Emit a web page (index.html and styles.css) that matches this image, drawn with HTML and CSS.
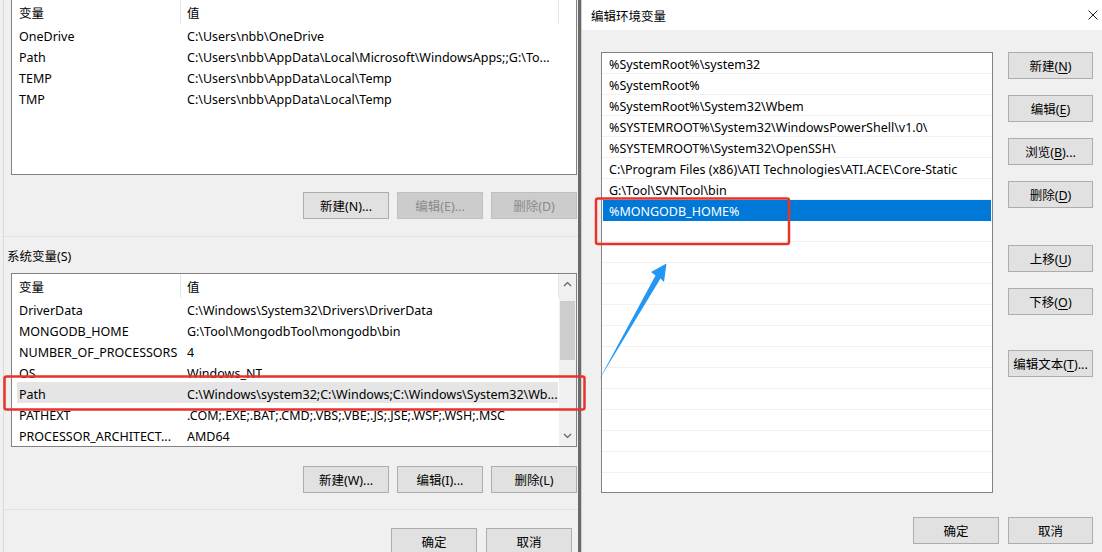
FILE: index.html
```html
<!DOCTYPE html>
<html lang="zh-CN">
<head>
  <meta charset="UTF-8">
  <meta name="viewport" content="width=device-width, initial-scale=1.0">
  <title>编辑环境变量</title>
  <link rel="stylesheet" href="styles.css">
</head>
<body>
  <div class="screen">
    <section class="env-window">
      <div class="list user-list">
        <div class="list-head">
          <span class="head-name">变量</span>
          <span class="head-value">值</span>
        </div>
        <div class="row"><span class="col-name">OneDrive</span><span class="col-value">C:\Users\nbb\OneDrive</span></div>
        <div class="row"><span class="col-name">Path</span><span class="col-value">C:\Users\nbb\AppData\Local\Microsoft\WindowsApps;;G:\To...</span></div>
        <div class="row"><span class="col-name">TEMP</span><span class="col-value">C:\Users\nbb\AppData\Local\Temp</span></div>
        <div class="row"><span class="col-name">TMP</span><span class="col-value">C:\Users\nbb\AppData\Local\Temp</span></div>
      </div>

      <div class="btn-row first-row">
        <button class="btn">新建(N)...</button>
        <button class="btn" disabled>编辑(E)...</button>
        <button class="btn" disabled>删除(D)</button>
      </div>

      <div class="sep sep-top"></div>
      <div class="group-title">系统变量(S)</div>

      <div class="list sys-list">
        <div class="rows">
          <div class="list-head">
            <span class="head-name">变量</span>
            <span class="head-value">值</span>
          </div>
          <div class="row"><span class="col-name">DriverData</span><span class="col-value">C:\Windows\System32\Drivers\DriverData</span></div>
          <div class="row"><span class="col-name">MONGODB_HOME</span><span class="col-value">G:\Tool\MongodbTool\mongodb\bin</span></div>
          <div class="row"><span class="col-name">NUMBER_OF_PROCESSORS</span><span class="col-value">4</span></div>
          <div class="row"><span class="col-name">OS</span><span class="col-value">Windows_NT</span></div>
          <div class="row hover"><span class="col-name">Path</span><span class="col-value">C:\Windows\system32;C:\Windows;C:\Windows\System32\Wb...</span></div>
          <div class="row"><span class="col-name">PATHEXT</span><span class="col-value">.COM;.EXE;.BAT;.CMD;.VBS;.VBE;.JS;.JSE;.WSF;.WSH;.MSC</span></div>
          <div class="row"><span class="col-name">PROCESSOR_ARCHITECT...</span><span class="col-value">AMD64</span></div>
        </div>
        <div class="scrollbar">
          <div class="scroll-btn">
            <svg width="9" height="6" viewBox="0 0 9 6"><polyline points="1,5 4.5,1.5 8,5" fill="none" stroke="#606060" stroke-width="1.2"/></svg>
          </div>
          <div class="thumb"></div>
          <div class="track"></div>
          <div class="scroll-btn">
            <svg width="9" height="6" viewBox="0 0 9 6"><polyline points="1,1 4.5,4.5 8,1" fill="none" stroke="#606060" stroke-width="1.2"/></svg>
          </div>
        </div>
      </div>

      <div class="btn-row second-row">
        <button class="btn">新建(W)...</button>
        <button class="btn">编辑(I)...</button>
        <button class="btn">删除(L)</button>
      </div>

      <div class="sep sep-bottom"></div>

      <div class="btn-row footer-row">
        <button class="btn">确定</button>
        <button class="btn">取消</button>
      </div>
    </section>

    <section class="edit-dialog">
      <div class="title-bar">
        <span class="title">编辑环境变量</span>
        <svg class="close" width="10" height="10" viewBox="0 0 10 10">
          <path d="M0.5 0.5 L9.5 9.5 M9.5 0.5 L0.5 9.5" stroke="#222" stroke-width="1"/>
        </svg>
      </div>

      <div class="dialog-body">
        <div class="path-list">
          <div class="path-item">%SystemRoot%\system32</div>
          <div class="path-item">%SystemRoot%</div>
          <div class="path-item">%SystemRoot%\System32\Wbem</div>
          <div class="path-item">%SYSTEMROOT%\System32\WindowsPowerShell\v1.0\</div>
          <div class="path-item">%SYSTEMROOT%\System32\OpenSSH\</div>
          <div class="path-item">C:\Program Files (x86)\ATI Technologies\ATI.ACE\Core-Static</div>
          <div class="path-item">G:\Tool\SVNTool\bin</div>
          <div class="path-item selected">%MONGODB_HOME%</div>
        </div>

        <div class="side-buttons">
          <button class="btn">新建(<u>N</u>)</button>
          <button class="btn">编辑(<u>E</u>)</button>
          <button class="btn">浏览(<u>B</u>)...</button>
          <button class="btn">删除(<u>D</u>)</button>
          <button class="btn spaced">上移(<u>U</u>)</button>
          <button class="btn">下移(<u>O</u>)</button>
          <button class="btn spaced-text">编辑文本(<u>T</u>)...</button>
        </div>
      </div>

      <div class="dialog-footer">
        <button class="btn">确定</button>
        <button class="btn">取消</button>
      </div>
    </section>

    <!-- annotations drawn over the screenshot -->
    <svg class="annotations" width="1102" height="552" viewBox="0 0 1102 552">
      <rect x="4.5" y="376.5" width="580" height="33" rx="2" fill="none" stroke="#e8332a" stroke-width="2.5"/>
      <rect x="596" y="198.5" width="193" height="45.5" rx="2" fill="none" stroke="#e8332a" stroke-width="2.5"/>
      <polygon points="599,380 655.5,275.5 651,272 666.5,263.5 664,282 660.5,278.5" fill="#2497f3"/>
    </svg>
  </div>
</body>
</html>
```

FILE: styles.css
```css
body {
  margin: 0;
  font-family: "Noto Sans", "Noto Sans CJK SC", sans-serif;
  font-size: 12.5px;
  color: #000;
  background-color: #f0f0f0;
}

.screen {
  position: relative;
  display: flex;
  width: 1102px;
  height: 552px;
  overflow: hidden;
}

/* left window: 环境变量 */

.env-window {
  box-sizing: border-box;
  width: 578px;
  margin-left: 3px;
  padding: 0 1px 0 7px;
  border-left: 1px solid #dadada;
  border-right: 3px solid #6a6a6a;
  background-color: #f0f0f0;
}

.list {
  box-sizing: border-box;
  width: 566px;
  background-color: #fff;
  border: 1px solid #828282;
}

.user-list {
  height: 176px;
  margin-top: -1px;
}

.sys-list {
  display: flex;
  height: 174px;
  margin-top: 9px;
}

.rows {
  flex: 1;
}

.list-head {
  display: flex;
  height: 24px;
  line-height: 28px;
}

.head-name {
  box-sizing: border-box;
  width: 169px;
  height: 24px;
  padding-left: 7px;
  border-right: 1px solid #e5e5e5;
}

.head-value {
  box-sizing: border-box;
  width: 378px;
  height: 24px;
  padding-left: 6px;
  border-right: 1px solid #e5e5e5;
}

.row {
  display: flex;
  height: 21px;
  line-height: 25px;
  margin-left: 5px;
  width: 541px;
  white-space: nowrap;
}

.row.hover {
  background-color: #e5e5e5;
}

.col-name {
  box-sizing: border-box;
  width: 170px;
  height: 21px;
  padding-left: 2px;
  overflow: hidden;
}

.col-value {
  height: 21px;
  overflow: hidden;
}

.scrollbar {
  display: flex;
  flex-direction: column;
  width: 17px;
  background-color: #f0f0f0;
}

.scroll-btn {
  height: 20px;
  display: flex;
  align-items: center;
  justify-content: center;
}

.thumb {
  height: 59px;
  margin: 7px 1px 0;
  background-color: #cdcdcd;
}

.track {
  flex: 1;
}

.btn-row {
  display: flex;
  justify-content: flex-end;
  gap: 8px;
}

.first-row {
  margin-top: 17px;
}

.second-row {
  margin-top: 19px;
}

.footer-row {
  margin-top: 18px;
  gap: 9px;
  padding-right: 5px;
}

.sep {
  height: 1px;
  margin-left: -7px;
  margin-right: -1px;
  background-color: #e2e2e2;
}

.sep-top {
  margin-top: 17px;
}

.sep-bottom {
  margin-top: 16px;
}

.group-title {
  margin: 9px 0 0 -4px;
  height: 18px;
  line-height: 22px;
}

.btn {
  box-sizing: border-box;
  width: 86px;
  height: 27px;
  padding: 0;
  font-family: inherit;
  font-size: 12.5px;
  color: #000;
  background-color: #e1e1e1;
  border: 1px solid #adadad;
  border-radius: 0;
}

.btn:disabled {
  color: #8a8a8a;
  background-color: #cccccc;
  border-color: #bfbfbf;
}

.btn u {
  text-underline-offset: 2px;
}

/* right window: 编辑环境变量 */

.edit-dialog {
  flex: 1;
  border-left: 1px solid #cfcfcf;
  background-color: #f0f0f0;
}

.title-bar {
  display: flex;
  justify-content: space-between;
  align-items: center;
  height: 30px;
  padding: 0 4px 0 9px;
  background-color: #fff;
}

.dialog-body {
  display: flex;
  gap: 15px;
  padding: 22px 0 0 19px;
}

.path-list {
  box-sizing: border-box;
  width: 392px;
  height: 441px;
  padding: 0 1px;
  border: 1px solid #828282;
  background-color: #fff;
  background-image: repeating-linear-gradient(to bottom, transparent 0, transparent 20px, #f1f1f1 20px, #f1f1f1 21px);
}

.path-item {
  height: 21px;
  line-height: 23px;
  padding-left: 6px;
  white-space: nowrap;
  overflow: hidden;
}

.path-item.selected {
  color: #fff;
  background-color: #0078d7;
}

.side-buttons {
  display: flex;
  flex-direction: column;
  gap: 16px;
}

.side-buttons .btn {
  width: 85px;
}

.side-buttons .spaced {
  margin-top: 21px;
}

.side-buttons .spaced-text {
  margin-top: 19px;
}

.dialog-footer {
  display: flex;
  justify-content: flex-end;
  gap: 9px;
  margin-top: 24px;
  padding-right: 9px;
}

.dialog-footer .btn:last-child {
  width: 85px;
}

.annotations {
  position: absolute;
  top: 0;
  left: 0;
  pointer-events: none;
}
```
